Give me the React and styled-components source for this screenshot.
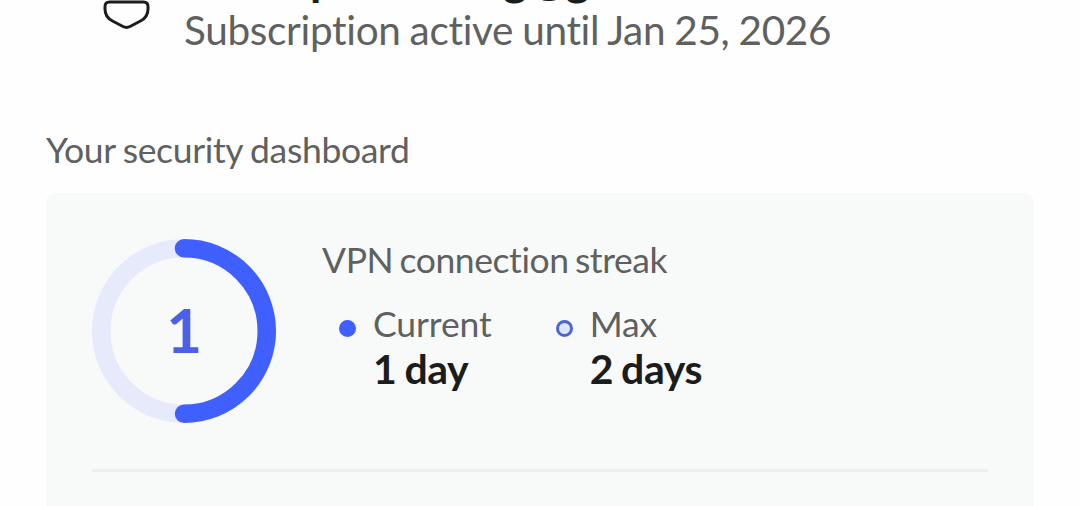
import React from "react";
//Styling
import styled, { createGlobalStyle } from "styled-components";

//Temp
const account = {
  email: "robertprecording@gmail.com",
  status: "Subscription active until Jan 25, 2026",
};

const streak = { current: 1, max: 2 };

const formatDays = (days) => `${days} ${days === 1 ? "day" : "days"}`;

const ProgressRing = ({ value, max }) => {
  const radius = 82.75;
  const length = Math.PI * radius;

  return (
    <Ring>
      <svg width="184" height="184" viewBox="0 0 184 184" fill="none">
        <circle cx="92" cy="92" r={radius} stroke="#e6eafa" strokeWidth="18.5" />
        <path
          d={`M92 ${92 - radius}A${radius} ${radius} 0 0 1 92 ${92 + radius}`}
          stroke="#3f5fff"
          strokeWidth="18.5"
          strokeLinecap="round"
          strokeDasharray={`${(value / max) * 2 * length} ${length * 2}`}
        />
      </svg>
      <RingValue>{value}</RingValue>
    </Ring>
  );
};

const App = () => {
  return (
    <>
      <GlobalStyle />
      <Screen>
        <Account>
          <Shield width="50" height="60" viewBox="0 0 50 60" fill="none">
            <path
              d="M8.500 32H42.500Q47 32 47 36.500V39C47 45 44.500 48.500 39.500 51L29 56.500Q25.500 58.300 22 56.500L11.500 51C6.500 48.500 4 45 4 39V36.500Q4 32 8.500 32Z"
              stroke="#1b1d1c"
              strokeWidth="3"
            />
          </Shield>
          <div>
            <Email>{account.email}</Email>
            <Status>{account.status}</Status>
          </div>
        </Account>
        <SectionTitle>Your security dashboard</SectionTitle>
        <Card>
          <Streak>
            <ProgressRing value={streak.current} max={streak.max} />
            <div>
              <StreakTitle>VPN connection streak</StreakTitle>
              <Legend>
                <Item>
                  <Dot />
                  <Label>Current</Label>
                  <Value>{formatDays(streak.current)}</Value>
                </Item>
                <Item>
                  <Dot $outlined />
                  <Label>Max</Label>
                  <Value>{formatDays(streak.max)}</Value>
                </Item>
              </Legend>
            </div>
          </Streak>
          <Divider />
        </Card>
      </Screen>
    </>
  );
};

const GlobalStyle = createGlobalStyle`
  * {
    box-sizing: border-box;
    margin: 0;
    padding: 0;
  }
  body {
    background: #fefefe;
    font-family: Lato, "Open Sans", sans-serif;
    font-variant-ligatures: none;
    letter-spacing: -0.35px;
    word-spacing: -1px;
    color: #5f6160;
    overflow: hidden;
  }
`;

const Screen = styled.main`
  width: 1080px;
  height: 506px;
  display: flex;
  flex-direction: column;
  justify-content: flex-end;
  overflow: hidden;
  padding: 0 46px;
`;

const Account = styled.header`
  display: flex;
  align-items: flex-start;
  gap: 33px;
  padding-left: 55px;
  margin-bottom: 72px;
`;

const Shield = styled.svg`
  flex: none;
  margin-top: 20px;
`;

const Email = styled.h1`
  font-size: 46px;
  font-weight: 700;
  line-height: 56px;
  letter-spacing: -0.3px;
  color: #1b1d1c;
`;

const Status = styled.p`
  font-size: 40.5px;
  line-height: 47px;
  padding-bottom: 3px;
  letter-spacing: -0.32px;
  white-space: nowrap;
`;

const SectionTitle = styled.h2`
  font-size: 35.5px;
  font-weight: 400;
  line-height: 44px;
  margin-bottom: 21px;
`;

const Card = styled.section`
  flex: none;
  width: 988px;
  height: 313px;
  padding: 46px 46px 0;
  border-radius: 9px 9px 0 0;
  background: #f8faf9;
`;

const Streak = styled.div`
  display: flex;
  gap: 46px;
  height: 184px;
`;

const Ring = styled.div`
  display: grid;
  place-items: center;
  width: 184px;
  height: 184px;
  > * {
    grid-area: 1 / 1;
  }
`;

const RingValue = styled.span`
  font-size: 62px;
  font-weight: 700;
  line-height: 72px;
  padding-bottom: 4px;
  color: #4a60e8;
`;

const StreakTitle = styled.h3`
  font-size: 35.5px;
  font-weight: 400;
  line-height: 42px;
  letter-spacing: -0.4px;
  word-spacing: -2.5px;
`;

const Legend = styled.div`
  display: flex;
  gap: 64px;
  padding-left: 17px;
  margin-top: 21px;
`;

const Item = styled.div`
  display: grid;
  grid-template-columns: 17px auto;
  column-gap: 17px;
  align-items: center;
`;

const Dot = styled.span`
  width: 17px;
  height: 17px;
  margin-top: 8px;
  border-radius: 50%;
  border: 3px solid ${({ $outlined }) => ($outlined ? "#4d64d3" : "#3f5fff")};
  background: ${({ $outlined }) => ($outlined ? "#dee5fc" : "#3f5fff")};
`;

const Label = styled.span`
  font-size: 35.5px;
  line-height: 44px;
  letter-spacing: -0.1px;
`;

const Value = styled.strong`
  grid-column: 2;
  font-size: 41px;
  font-weight: 700;
  line-height: 46px;
  letter-spacing: -0.4px;
  word-spacing: -1.5px;
  color: #1b1d1c;
  white-space: nowrap;
`;

const Divider = styled.hr`
  height: 3px;
  margin-top: 46px;
  border: 0;
  background: #edefee;
`;

export default App;
